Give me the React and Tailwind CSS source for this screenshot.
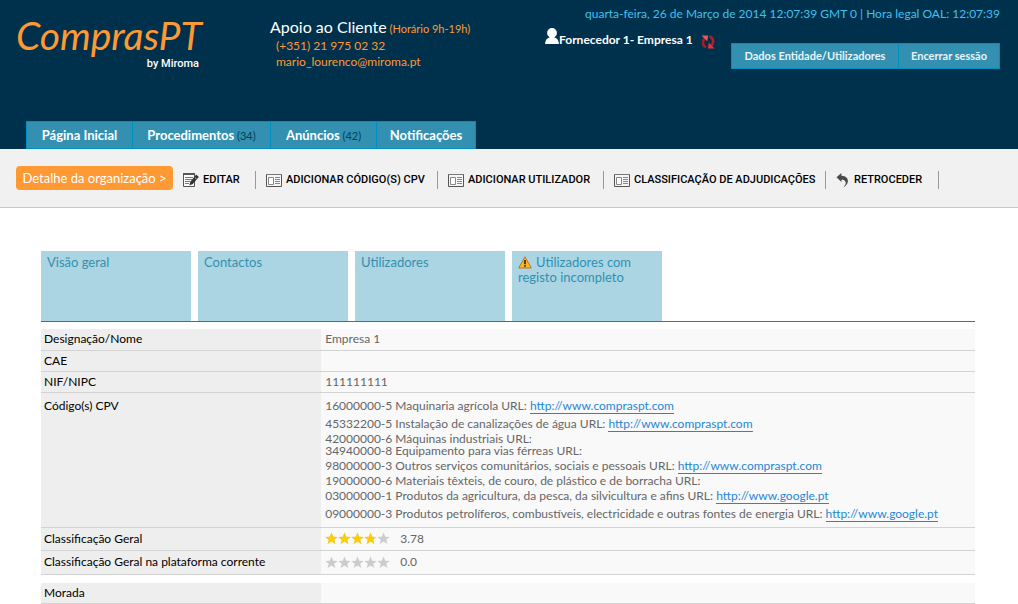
import React from 'react';

const navLinks = [
  { label: 'Página Inicial', width: 'min-w-[106px]' },
  { label: 'Procedimentos', count: 34, width: 'min-w-[138px]' },
  { label: 'Anúncios', count: 42, width: 'min-w-[106px]' },
  { label: 'Notificações', width: 'min-w-[100px]' },
];

const actions = [
  { label: 'EDITAR', icon: EditIcon, width: 'min-w-[72px]' },
  { label: 'ADICIONAR CÓDIGO(S) CPV', icon: CardIcon, width: 'min-w-[171px]' },
  { label: 'ADICIONAR UTILIZADOR', icon: CardIcon, width: 'min-w-[155px]' },
  { label: 'CLASSIFICAÇÃO DE ADJUDICAÇÕES', icon: CardIcon, width: 'min-w-[211px]' },
  { label: 'RETROCEDER', icon: BackIcon, width: 'min-w-[102px]' },
];

const tabs = [
  { label: 'Visão geral' },
  { label: 'Contactos' },
  { label: 'Utilizadores' },
  { label: 'Utilizadores com registo incompleto', warning: true },
];

const cpvCodes = [
  { text: '16000000-5 Maquinaria agrícola', url: 'http://www.compraspt.com' },
  { text: '45332200-5 Instalação de canalizações de água', url: 'http://www.compraspt.com' },
  { text: '42000000-6 Máquinas industriais' },
  { text: '34940000-8 Equipamento para vias férreas' },
  { text: '98000000-3 Outros serviços comunitários, sociais e pessoais', url: 'http://www.compraspt.com' },
  { text: '19000000-6 Materiais têxteis, de couro, de plástico e de borracha' },
  { text: '03000000-1 Produtos da agricultura, da pesca, da silvicultura e afins', url: 'http://www.google.pt' },
  { text: '09000000-3 Produtos petrolíferos, combustíveis, electricidade e outras fontes de energia', url: 'http://www.google.pt' },
];

function EditIcon() {
  return (
    <svg width="16" height="16" viewBox="0 0 16 16" className="shrink-0">
      <path d="M0.5 1.5h11v13h-11z" fill="#fafafa" stroke="#555" />
      <path d="M0 1h12v2H0z" fill="#555" />
      <path d="M2 5.5h8M2 7.5h7M2 9.5h5M2 11.5h4" stroke="#777" />
      <path d="M13.2 2.6l2.6 2.4-6 7-3.4 1.4.9-3.6z" fill="#333" />
      <path d="M12 5.6l1.6 1.4" stroke="#ddd" strokeWidth="0.8" />
    </svg>
  );
}

function CardIcon() {
  return (
    <svg width="16" height="13" viewBox="0 0 16 13" className="shrink-0">
      <path d="M0.5 0.5h15v12H0.5z" fill="#f6f6f6" stroke="#555" />
      <path d="M0 0.5h16" stroke="#777" />
      <path d="M2.5 3.5h5v7h-5z" fill="#fff" stroke="#888" />
      <path d="M9 3.5h5M9 5.5h5M9 7.5h5M9 9.5h5" stroke="#888" />
    </svg>
  );
}

function BackIcon() {
  return (
    <svg width="14" height="16" viewBox="0 0 14 16" className="shrink-0">
      <path d="M0.5 5.2L5.4 1v2.7c5 .2 6.800 3 6.500 5.900-.3 2.600-2 4.300-4.600 5.800 2-2.200 2.800-3.700 2.300-5.300-.5-1.700-1.900-2.300-4.200-2.300V10z" fill="#4a4a4a" />
    </svg>
  );
}

function UserIcon() {
  return (
    <svg width="14" height="16" viewBox="0 0 14 16" className="shrink-0">
      <circle cx="7" cy="4.900" r="4.900" fill="#fff" />
      <path d="M4.500 8h5v1.500c2.700.6 4.200 2.500 4.500 6.500H0c.3-4 1.800-5.900 4.500-6.500z" fill="#fff" />
    </svg>
  );
}

function RefreshIcon() {
  return (
    <svg width="14" height="14" viewBox="0 0 14 14">
      <path d="M5.200 12.400C1.600 11 0.900 6.400 3.600 3.400" fill="none" stroke="#a31c28" strokeWidth="2.600" />
      <path d="M0.500 0.500h6.600L6.300 6.300z" fill="#ea5a5f" />
      <path d="M8.500 1.500c3.900 1.200 4.700 5.600 2.200 9" fill="none" stroke="#b81c26" strokeWidth="2.600" />
      <path d="M7 13.500h6.500L7.800 7.600z" fill="#e2343b" />
    </svg>
  );
}

function WarningIcon() {
  return (
    <svg width="14" height="13" viewBox="0 0 14 13" className="mr-1 inline-block align-[-2px]">
      <path d="M7 0.800L13.300 12H0.700z" fill="#fbb62a" stroke="#b8761c" strokeLinejoin="round" />
      <path d="M7 4v4.200M7 9.300v1.500" stroke="#2b1c00" strokeWidth="1.600" />
    </svg>
  );
}

const STAR = 'M6.500 0.500l1.700 4.200 4.500.2-3.500 2.800 1.200 4.300-3.900-2.400L2.600 12l1.200-4.300L.3 4.900l4.500-.2z';

function Stars({ id, value }) {
  return (
    <svg width="65" height="13" viewBox="0 0 65 13" role="img" aria-label={`${value} / 5`}>
      <defs>
        <clipPath id={id}>
          <rect width={value * 13} height="13" />
        </clipPath>
      </defs>
      {[0, 1, 2, 3, 4].map((i) => (
        <path key={i} d={STAR} transform={`translate(${i * 13} 0)`} fill="#ccc" />
      ))}
      <g clipPath={`url(#${id})`}>
        {[0, 1, 2, 3, 4].map((i) => (
          <path key={i} d={STAR} transform={`translate(${i * 13} 0)`} fill="#fc0" />
        ))}
      </g>
    </svg>
  );
}

function Row({ label, children, className = 'h-[21px]' }) {
  return (
    <tr className={`border-b border-[#d3d3d3] ${className}`}>
      <th scope="row" className="w-[30%] bg-[#eee] pl-[3px] text-left align-middle font-normal text-black">
        {label}
      </th>
      <td className="bg-[#f9f9f9] pl-1 align-middle text-[#666]">{children}</td>
    </tr>
  );
}

function Header() {
  return (
    <header className="flex min-h-[149px] flex-col justify-between bg-[#00314c]">
      <div className="flex items-start pr-[18px] pl-4">
        <a href="#" className="flex w-[254px] flex-col pt-3 text-[#ff9933]">
          <span className="text-[39px] leading-[46px] italic">ComprasPT</span>
          <span className="w-[183px] text-right font-['Roboto'] text-[11px] leading-3 font-medium text-white">by Miroma</span>
        </a>
        <div className="pt-[18px] text-xs leading-4 text-[#ff9933]">
          <p className="text-[11px] leading-[18px]">
            <span className="text-base leading-[18px] text-white">Apoio ao Cliente</span> (Horário 9h-19h)
          </p>
          <p className="pl-1.5">(+351) 21 975 02 32</p>
          <p className="pl-1.5">
            <a href="mailto:mario_lourenco@miroma.pt">mario_lourenco@miroma.pt</a>
          </p>
        </div>
        <div className="ml-auto w-[455px] pt-1.5">
          <p className="text-right text-xs leading-4 text-[#3fc1f0]">
            quarta-feira, 26 de Março de 2014 12:07:39 GMT 0 | Hora legal OAL: 12:07:39
          </p>
          <div className="flex items-start justify-between pt-1.5">
            <div className="flex items-start text-xs leading-4 font-bold text-white">
              <UserIcon />
              <span className="pt-1">Fornecedor 1- Empresa 1</span>
              <button type="button" aria-label="Atualizar" className="ml-2 pt-[7px]">
                <RefreshIcon />
              </button>
            </div>
            <div className="mt-[15px] flex border border-[#0090c0] bg-[#3390b0] text-[11px] leading-6 font-bold text-[#e8f4f8]">
              <button type="button" className="min-w-[167px] border-r border-[#0090c0]">Dados Entidade/Utilizadores</button>
              <button type="button" className="min-w-[100px]">Encerrar sessão</button>
            </div>
          </div>
        </div>
      </div>
      <nav className="flex pl-[26px] text-[13px]">
        {navLinks.map((link) => (
          <a
            key={link.label}
            href="#"
            className={`${link.width} h-7 border-y border-l border-[#0090c0] bg-[#3390b0] text-center leading-[26px] font-bold text-white last:border-r`}
          >
            {link.label}
            {link.count && <span className="text-[11px] font-normal text-[#00405e]"> ({link.count})</span>}
          </a>
        ))}
      </nav>
    </header>
  );
}

export default function App() {
  return (
    <div className="bg-white font-['Lato',sans-serif]">
      <Header />

      <div className="flex h-[59px] items-center border-b border-[#c8c8c8] bg-[#f1f1f1] pt-1 pl-4">
        <h1 className="mb-1 min-w-[157px] rounded bg-[#ff9933] text-center text-[13px] leading-6 whitespace-nowrap text-white">
          Detalhe da organização &gt;
        </h1>
        {actions.map(({ label, icon: Icon, width }) => (
          <button
            key={label}
            type="button"
            className={`${width} box-content flex h-[18px] items-center gap-1 border-r border-[#999] pl-[10px] font-['Roboto'] text-[11px] font-medium whitespace-nowrap text-black`}
          >
            <Icon />
            {label}
          </button>
        ))}
      </div>

      <main className="pt-[43px] pr-[43px] pl-[41px]">
        <div className="flex gap-[7px] border-b border-[#666]">
          {tabs.map((tab) => (
            <a key={tab.label} href="#" className="h-[70px] w-[150px] bg-[#abd5e3] px-1.5 pt-1 text-[13px] leading-[15px] text-[#3390b0]">
              {tab.warning && <WarningIcon />}
              {tab.label}
            </a>
          ))}
        </div>

        <table className="mt-[7px] w-full border-collapse text-xs leading-[18px]">
          <tbody>
            <Row label="Designação/Nome">Empresa 1</Row>
            <Row label="CAE" />
            <Row label="NIF/NIPC">111111111</Row>
            <tr className="border-b border-[#d3d3d3]">
              <th scope="row" className="bg-[#eee] pt-1 pl-[3px] text-left align-top font-normal text-black">Código(s) CPV</th>
              <td className="bg-[#f9f9f9] py-1 pl-1 text-[#666]">
                {cpvCodes.map((cpv) => (
                  <p key={cpv.text} className={cpv.url ? 'leading-[18px]' : 'leading-3'}>
                    {cpv.text} URL:{' '}
                    {cpv.url && (
                      <a href={cpv.url} className="border-b border-[#1e87d6] text-[#1e87d6]">
                        {cpv.url}
                      </a>
                    )}
                  </p>
                ))}
              </td>
            </tr>
            <Row label="Classificação Geral" className="h-[23px]">
              <div className="flex items-center gap-[10px]">
                <Stars id="geral" value={3.78} /> 3.78
              </div>
            </Row>
            <Row label="Classificação Geral na plataforma corrente" className="h-6">
              <div className="flex items-center gap-[10px]">
                <Stars id="plataforma" value={0} /> 0.0
              </div>
            </Row>
          </tbody>
        </table>

        <table className="mt-2 w-full border-collapse text-xs leading-[18px]">
          <tbody>
            <Row label="Morada" />
          </tbody>
        </table>
      </main>
    </div>
  );
}
